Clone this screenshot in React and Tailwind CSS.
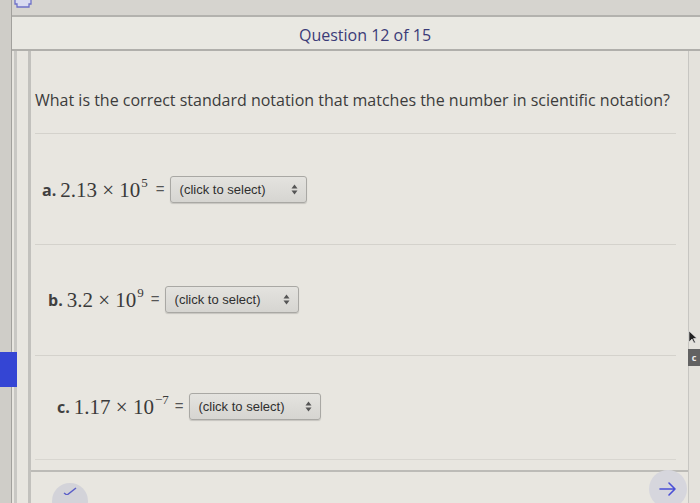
import React from "react";

const SelectBox = ({ width }) => (
    <div
        className={`${width} h-[27px] flex items-center justify-between pl-[9px] pr-[8px] rounded-[3px] border border-[#a9a8a4] bg-gradient-to-b from-[#e4e3df] to-[#d6d5d1] shadow-[0_1px_1px_rgba(0,0,0,0.15)]`}
    >
        <span className="text-[13px] text-[#2f2f2f] font-['Liberation_Sans',Arial,sans-serif]">(click to select)</span>
        <svg width="7" height="11" viewBox="0 0 7 11">
            <path d="M3.5 0.5 L6.5 4.5 L0.5 4.5 Z" fill="#555" />
            <path d="M3.5 10.5 L6.5 6.5 L0.5 6.5 Z" fill="#555" />
        </svg>
    </div>
);

const Row = ({ label, mantissa, exp, pad, gap, selectWidth }) => (
    <div className={`flex items-center h-[27px] ${pad}`}>
        <span className="text-[16px] font-bold text-[#404040] mr-[4px]">{label}</span>
        <span className="flex items-start text-[21px] text-[#3a3a3a] font-['Liberation_Serif','Times_New_Roman',serif] leading-none pt-[2px]">
            <span>{mantissa} × 10</span>
            <span className="text-[13px] leading-none -mt-[4px] ml-[1px]">{exp}</span>
        </span>
        <span className={`text-[15px] text-[#555] ${gap} mr-[5px] font-['Liberation_Sans',Arial,sans-serif]`}>=</span>
        <SelectBox width={selectWidth} />
    </div>
);

const App = () => {
    return (
        <div className="w-[700px] h-[503px] bg-[#d6d4cf] flex overflow-hidden relative font-['Open_Sans',sans-serif]">
            {/* top-left toolbar icon */}
            <svg className="absolute left-[13px] top-0" width="20" height="8" viewBox="0 0 20 8">
                <path d="M2 0 V4 H4 V7 H16 V4 H18 V0" fill="#d9dbf0" stroke="#6d70c8" strokeWidth="1.3" />
            </svg>

            {/* outer left rail */}
            <div className="w-[12px] shrink-0 border-r border-[#a2a19d] bg-[#cfcdc8]" />

            <div className="flex-1 flex flex-col pt-[15px]">
                <div className="flex-1 flex flex-col bg-[#e8e6e0] border-t-2 border-[#b3b2ae]">
                    <div className="h-[34px] flex items-center justify-center pl-[18px] border-b-2 border-[#b0afab] bg-[#e9e8e2]">
                        <span className="text-[16px] text-[#3b3b78] pt-[3px]">Question 12 of 15</span>
                    </div>

                    <div className="flex-1 flex">
                        {/* inner rail */}
                        <div className="w-[19px] shrink-0 flex">
                            <div className="w-[3px] ml-[2px] bg-[#c9c8c4]" />
                            <div className="flex-1" />
                            <div className="w-[3px] bg-[#c2c1bd]" />
                        </div>

                        <div className="flex-1 flex flex-col">
                            <div className="flex-1 flex flex-col pl-[4px] pr-[4px]">
                                <p className="pt-[37px] text-[16px] leading-[24px] text-[#3c3c3c] whitespace-nowrap">
                                    What is the correct standard notation that matches the number in scientific notation?
                                </p>
                                <div className="mt-[21px] mr-[8px] h-px bg-[#d4d2cc]" />

                                <div className="pt-[42px]">
                                    <Row label="a." mantissa="2.13" exp="5" pad="pl-[7px]" gap="ml-[8px]" selectWidth="w-[137px]" />
                                </div>
                                <div className="mt-[41px] mr-[8px] h-px bg-[#d4d2cc]" />

                                <div className="pt-[41px]">
                                    <Row label="b." mantissa="3.2" exp="9" pad="pl-[13px]" gap="ml-[7px]" selectWidth="w-[134px]" />
                                </div>
                                <div className="mt-[42px] mr-[8px] h-px bg-[#d4d2cc]" />

                                <div className="pt-[37px]">
                                    <Row label="c." mantissa="1.17" exp="−7" pad="pl-[22px]" gap="ml-[6px]" selectWidth="w-[132px]" />
                                </div>
                                <div className="mt-[39px] mr-[8px] h-px bg-[#d8d6d0]" />
                            </div>

                            {/* footer */}
                            <div className="h-[33px] border-t-2 border-[#bcbbb7] flex items-start justify-between pl-[21px] pr-[1px] pt-[2px]">
                                <div className="w-[36px] h-[36px] rounded-full bg-[#d3d3d9] mt-[9px] flex items-start justify-center pt-[4px]">
                                    <svg width="14" height="8" viewBox="0 0 14 8">
                                        <path d="M1 6 L4 8 M4 8 L13 1" stroke="#5a5dc8" strokeWidth="1.5" fill="none" />
                                    </svg>
                                </div>
                                <div className="w-[38px] h-[38px] rounded-full bg-[#d6d6dd] flex items-center justify-center -mt-[4px]">
                                    <svg width="18" height="14" viewBox="0 0 18 14">
                                        <path d="M1 7 H16 M10 1 L16 7 L10 13" stroke="#4a4fd6" strokeWidth="1.6" fill="none" strokeLinecap="round" strokeLinejoin="round" />
                                    </svg>
                                </div>
                            </div>
                        </div>

                        {/* right edge */}
                        <div className="w-[12px] shrink-0 border-l border-[#c7c6c2] bg-[#e4e2dc]" />
                    </div>
                </div>
            </div>

            {/* blue tab on the left */}
            <div className="absolute left-0 top-[352px] w-[17px] h-[35px] bg-[#3445d4]" />

            {/* cursor and side tab on the right */}
            <svg className="absolute left-[688px] top-[330px]" width="10" height="14" viewBox="0 0 10 14">
                <path d="M1 1 L1 12 L4 9 L6 13 L7.5 12.5 L5.5 8.5 L9 8.5 Z" fill="#222" stroke="#eee" strokeWidth="0.6" />
            </svg>
            <div className="absolute left-[688px] top-[349px] w-[12px] h-[17px] bg-[#626262] flex items-center justify-center">
                <span className="text-[9px] font-bold text-[#eee] leading-none">c</span>
            </div>
        </div>
    );
};

export default App;
